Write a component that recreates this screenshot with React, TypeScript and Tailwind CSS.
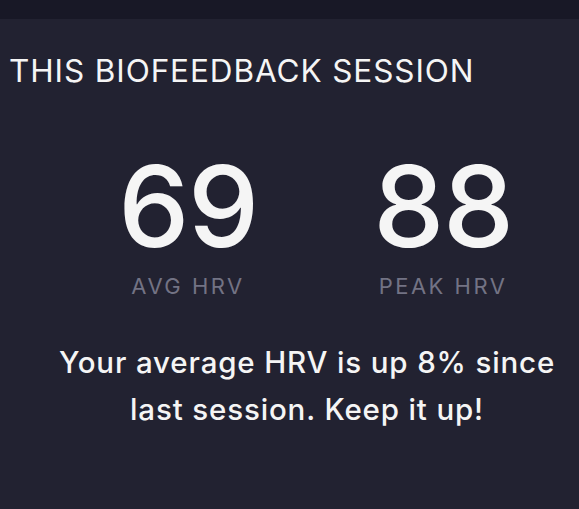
import React from "react"

type Stat = {
    value: string,
    label: string,
}

const stats: Stat[] = [
    { value: "69", label: "AVG HRV" },
    { value: "88", label: "PEAK HRV" },
]

export default function App() {
    return (
        <div className="w-[579px] h-[509px] overflow-hidden bg-[#222231] text-[#f5f5f5] font-['Inter',sans-serif]">
            <div className="h-[19px] bg-[#181826]" />
            {/* title */}
            <h1 className="pl-[9px] pt-[34px] text-[31.5px] leading-[36px] tracking-[0.9px]">THIS BIOFEEDBACK SESSION</h1>
            {/* stats */}
            <div className="flex pl-[73px] mt-[62px] gap-[25px]">
                {stats.map((s) => (
                    <div key={s.label} className="w-[230px] flex flex-col items-center">
                        <span className="text-[113px] leading-[110px] font-medium tracking-[-1.4px]">{s.value}</span>
                        <span className="mt-[12px] text-[22px] leading-[26px] tracking-[2.5px] text-[#737384]">{s.label}</span>
                    </div>
                ))}
            </div>
            <p className="mt-[40px] ml-[50px] w-[514px] text-center text-[29.5px] leading-[47px] font-medium tracking-[0.85px]">
                Your average HRV is up 8% since last session. Keep it up!
            </p>
        </div>
    )
}
